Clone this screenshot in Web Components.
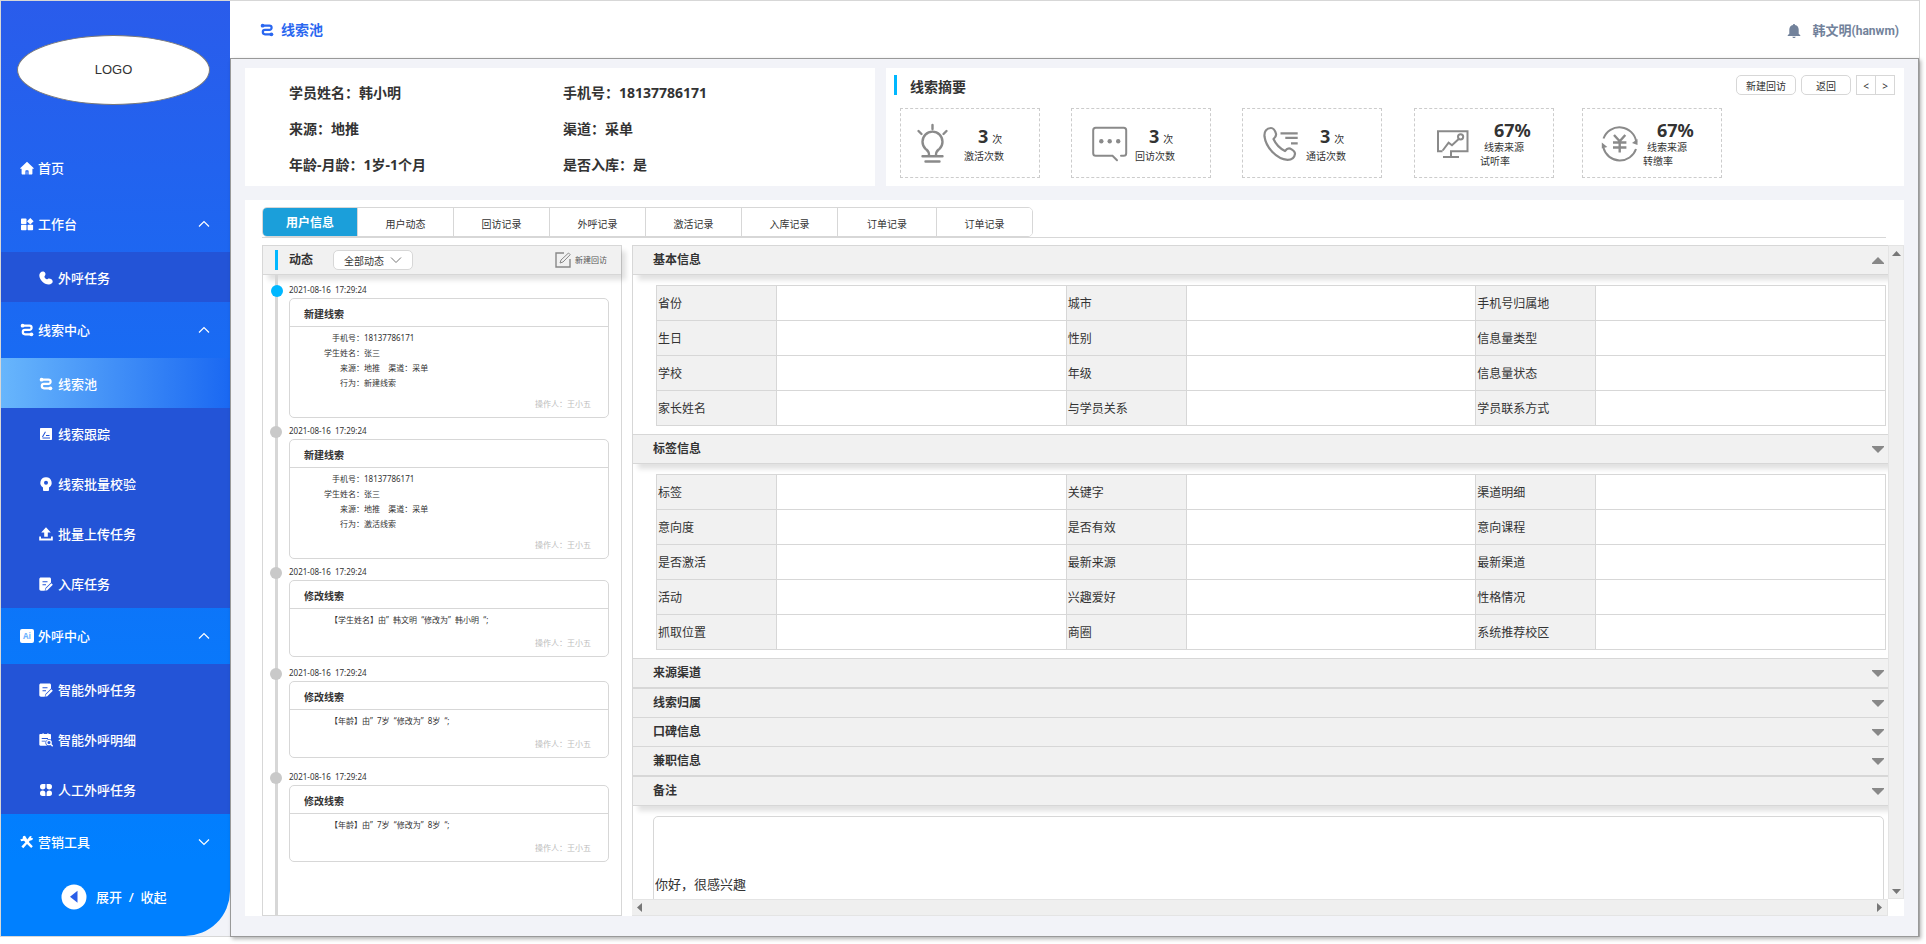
<!DOCTYPE html>
<html lang="zh-CN">
<head>
<meta charset="utf-8">
<title>线索池</title>
<style>
  html, body { margin: 0; height: 100%; background: #fff; }
  body {
    font-family: "Noto Sans", "Noto Sans CJK SC", sans-serif;
    font-size: 12px;
    line-height: 16px;
    color: #333;
    --line: #d7d7d7;
    --accent: #00b7ff;
    --page: #f2f3f8;
    --bar: #f1f1f1;
  }
</style>
</head>
<body>
<lead-app></lead-app>

<script>
const define = (name, html, setup) => {
  const tpl = document.createElement('template');
  tpl.innerHTML = html;
  customElements.define(name, class extends HTMLElement {
    connectedCallback() {
      if (this.shadowRoot) return;
      const root = this.attachShadow({ mode: 'open' });
      root.append(tpl.content.cloneNode(true));
      if (setup) setup(root, this);
    }
  });
};

/* ---------- icons ---------- */
const line = 'fill="none" stroke="currentColor"';
const ICONS = {
  home: ['0 0 14 14', '<path fill="currentColor" d="M7 .8 13.6 7c.4.4.2.8-.3.8h-.9v4.6c0 .6-.4 1-1 1H8.6V10c0-.5-.3-.8-.8-.8H6.200c-.5 0-.8.3-.8.8v3.400H2.600c-.6 0-1-.4-1-1V7.800H.7c-.5 0-.7-.4-.3-.8z"/><rect x="6.400" y="10.500" width="1.200" height="3" fill="currentColor" opacity=".5"/>'],
  blocks: ['0 0 14 14', '<g fill="currentColor"><rect x="1" y="1.500" width="5.500" height="5.500" rx=".8"/><rect x="1" y="7.800" width="5.500" height="5.500" rx=".8"/><rect x="7.600" y="7.800" width="5.500" height="5.500" rx=".8"/><path d="m10.300.9 3.300 3.300-3.300 3.300L7 4.200z"/></g>'],
  route: ['0 0 14 14', `<g ${line} stroke-width="2.200"><path d="M2.500 2.700h7a2 2 0 0 1 0 4.200H5a2.200 2.200 0 0 0 0 4.400h6.500"/></g><circle cx="2.600" cy="2.700" r="1.900" fill="currentColor"/><circle cx="11.400" cy="11.300" r="1.900" fill="currentColor"/>`],
  phone: ['0 0 14 14', '<path fill="currentColor" d="M4.600.5c1.800.4 2.500 3 1.300 4.300-.6.700-.6 1.200-.1 2 .5.900 1.200 1.400 1.900 1.500.8 0 1.300-.8 2.300-.8 1.700 0 3.700 1.300 3.700 3 0 1.600-1.800 3-3.900 3C4.800 13.500.3 8.700.3 4.300.3 2 2.300 0 4.600.5z"/>'],
  track: ['0 0 14 14', '<path fill="currentColor" fill-rule="evenodd" d="M2 1h10c.6 0 1 .4 1 1v10c0 .6-.4 1-1 1H2c-.6 0-1-.4-1-1V2c0-.6.4-1 1-1zm4 3.500L3 9.700l.9.500 3-5.200zM7 8v1h3.500V8zm-3.500 2.600v1h7.500v-1z"/>'],
  bulb: ['0 0 14 14', '<path fill="currentColor" fill-rule="evenodd" d="M7 .3a5.500 5.500 0 0 1 3 10.200V13c0 .6-.3.900-.8.900H4.800c-.5 0-.8-.3-.8-.9v-2.500A5.500 5.500 0 0 1 7 .3zm0 3.500a2 2 0 1 0 0 4 2 2 0 0 0 0-4z"/>'],
  upload: ['0 0 14 14', '<path fill="currentColor" d="m7 .3 4.800 5.200H8.800v4.200H5.200V5.500H2.200zM.2 9.500h1.800v2h10v-2h1.800v4H.2z"/>'],
  note: ['0 0 14 14', '<path fill="currentColor" fill-rule="evenodd" d="M2 .5h8.500c.9 0 1.500.6 1.500 1.500v3.500L6.500 11l-.8 2.700H2c-1 0-1.700-.7-1.700-1.700V2c0-.9.700-1.500 1.700-1.500zm1.500 3.700v1h5v-1zm0 3v1H7v-1z"/><path fill="currentColor" d="m12.300 6.200 1.500 1.500-5.500 5.500-2 .5.500-2z"/>'],
  search: ['0 0 14 14', '<path fill="currentColor" fill-rule="evenodd" d="M2 1h1.500V.300h1.200V1h3.600V.300h1.200V1H11c.5 0 1 .4 1 1v4.500a3.700 3.700 0 0 0-4 6.200H1.500c-.8 0-1.200-.5-1.200-1.200V2C.3 1.400.9 1 1.500 1zm.7 4v.9H9V5zm0 2.700v.900h4v-.9z"/><circle cx="10" cy="9.500" r="2.200" fill="none" stroke="currentColor" stroke-width="1.300"/><path d="m11.500 11 2.200 2.200" stroke="currentColor" stroke-width="1.400"/>'],
  clover: ['0 0 14 14', '<g fill="currentColor"><path d="M3.600 1h2.800v2.700A2.700 2.700 0 1 1 3.600 1zM10.400 1H7.600v2.700A2.700 2.700 0 1 0 10.400 1zM3.600 13h2.800v-2.700A2.700 2.700 0 1 0 3.600 13zM10.400 13H7.600v-2.700a2.700 2.700 0 1 1 2.800 2.700z"/></g>'],
  tools: ['0 0 14 14', '<path fill="currentColor" d="M3 1.200 5 .8l2.300 3.600 2.500-3.100 1.800-.3-.5 2 2 .200-.8 1.800-2.600.8L8.800 7l4 4.300-1.600 1.700L7 9l-3.700 4.200-1.900-1.700L5.400 7.300 4 5.700l-2.800.6-.9-2L2.500 4z"/>'],
  caret: ['0 0 12 12', `<path ${line} stroke-width="1.200" d="m1 8.500 5-5 5 5"/>`],
  back: ['0 0 26 26', '<circle cx="13" cy="13" r="12.500" fill="#fff"/><path fill="#2a5fe8" d="M16.500 6.800v12L9 12.800z"/>'],
  bell: ['0 0 14 16', '<path fill="currentColor" d="M7 1c.7 0 1 .4 1 1 2.300.5 3.700 2.200 3.700 4.600v4.200l1.600 1.400v.8H.7v-.8l1.600-1.400V6.600C2.300 4.200 3.700 2.500 6 2c0-.6.3-1 1-1zM5.300 13.800h3.400c-.2.900-.8 1.300-1.700 1.300s-1.500-.4-1.700-1.300z"/>'],
  chev: ['0 0 12 8', `<path ${line} d="m1 1.500 5 5 5-5"/>`],
  edit: ['0 0 16 16', `<path ${line} stroke-width="1.400" d="M9 1H1v14h14V7"/><path ${line} d="m5 11 1-3 7.500-7 1.700 1.700L8 10z"/>`],
  idea: ['0 0 42 42', `<g ${line} stroke-width="2.400" stroke-linecap="round"><path d="M16.500 3v4M2.500 9l3 3M30.500 9l-3 3M13 33c0-4-1.500-4.500-3.500-6.200a10 10 0 1 1 14 0C21.500 28.500 20 29 20 33M6.500 34.300h20M9.500 39.500h14"/></g>`],
  chat: ['0 0 42 42', `<g ${line} stroke-width="2" stroke-linecap="round"><path d="M30 38.300l-4.500-4.600H8.700a2.500 2.500 0 0 1-2.500-2.500v-23a2.500 2.500 0 0 1 2.500-2.500h28a2.500 2.500 0 0 1 2.500 2.500v23a2.500 2.500 0 0 1-2.500 2.500H34"/></g><g fill="currentColor"><circle cx="14.300" cy="19.300" r="2.200"/><circle cx="22.700" cy="19.300" r="2.200"/><circle cx="31.200" cy="19.300" r="2.200"/></g>`],
  call: ['0 0 42 42', `<g ${line} stroke-width="2.200" stroke-linejoin="round"><path d="M13 6C8.500 6 6 9.500 6.500 14.500 8 25.500 18.500 37 29.500 37.800c4 0 7-2.300 7.500-6 0-2.200-2.500-4-5-5.200-2.200-.6-3.500.5-5 2.400C22 26.500 17.500 21.500 15.500 17c1.500-1.200 3-2.700 2.500-5.200C17 8.200 15.500 6 13 6z"/><path d="M22.500 11.300h17.200M27.300 15.900h12.400M33 21.300h6.700"/></g>`],
  chart: ['0 0 42 42', `<g ${line} stroke-width="2"><path d="M12.500 29.200H8V9.200h29.500v20H21v5.500M13 35h16M12.700 28.500l5.900-7.800 3.400 2.600 6.700-6.300"/><circle cx="30.600" cy="14.800" r="2.600"/></g>`],
  yen: ['0 0 42 42', `<g ${line} stroke-width="2"><path d="M5.500 16.500a17 17 0 0 1 32.800 3.500M38 27A17 17 0 0 1 5.500 26"/><path stroke-width="2.400" d="m16 13 5.700 6.300L27.300 13M21.700 19v11.500M15 20.500h13.400M15 25.500h13.400"/></g><path fill="currentColor" d="m34 21 5.500-4v6zM3.800 20.500v6l5.500-1.500z"/>`],
};
customElements.define('ui-icon', class extends HTMLElement {
  static observedAttributes = ['name'];
  connectedCallback() { this.draw(); }
  attributeChangedCallback() { this.draw(); }
  draw() {
    const icon = ICONS[this.getAttribute('name')];
    if (!icon) return;
    const root = this.shadowRoot || this.attachShadow({ mode: 'open' });
    root.innerHTML = '<style>:host{display:block;flex:none}svg{display:block;width:100%;height:100%}</style>' +
      `<svg viewBox="${icon[0]}" aria-hidden="true">${icon[1]}</svg>`;
  }
});

/* ---------- side navigation ---------- */
define('nav-item', `
<style>
  :host { display: block; }
  a {
    display: flex; align-items: center; gap: 5px; box-sizing: border-box;
    height: 50px; padding: 2px 0 0 38px;
    color: #fff; text-decoration: none; font-size: 13px; font-weight: 500;
  }
  ui-icon { width: 14px; height: 14px; }
  :host([top]) a { height: 56px; padding: 0 0 0 19px; gap: 4px; }
  :host([active]) a { background: linear-gradient(90deg, #68b6fc, #1a68f2); }
</style>
<a href="#"><ui-icon></ui-icon><span><slot></slot></span></a>`,
(root, host) => {
  root.querySelector('ui-icon').setAttribute('name', host.getAttribute('icon'));
  if (host.hasAttribute('active')) root.querySelector('a').setAttribute('aria-current', 'page');
});

define('nav-group', `
<style>
  :host { display: block; }
  button {
    display: flex; align-items: center; gap: 4px; box-sizing: border-box;
    width: 100%; height: 56px; margin: 0; padding: 0 20px 0 19px;
    border: 0; background: none; color: #fff; text-align: left;
    font: inherit; font-size: 13px; font-weight: 500; line-height: 16px;
  }
  .label { flex: 1; }
  .mark { width: 14px; height: 14px; display: grid; }
  .caret { width: 12px; height: 12px; }
  :host([closed]) .caret { transform: rotate(180deg); }
  .sub { background: #2354d7; }
  .ai { background: #fff; border-radius: 2px; color: #6db4ff; font: 700 8px/14px "Open Sans", sans-serif; text-align: center; }
</style>
<button type="button"><span class="mark"></span><span class="label"></span><ui-icon class="caret" name="caret"></ui-icon></button>
<div class="sub"><slot></slot></div>`,
(root, host) => {
  const mark = root.querySelector('.mark'), icon = host.getAttribute('icon');
  if (icon === 'ai') { mark.classList.add('ai'); mark.textContent = 'Ai'; }
  else mark.innerHTML = `<ui-icon name="${icon}"></ui-icon>`;
  root.querySelector('.label').textContent = host.getAttribute('label');
  root.querySelector('button').setAttribute('aria-expanded', String(!host.hasAttribute('closed')));
});

define('side-nav', `
<style>
  :host {
    display: flex; flex-direction: column; flex: none; width: 229px;
    background: linear-gradient(180deg, #2a5ceb, #0080ff 92%);
    border-bottom-right-radius: 45px; color: #fff;
  }
  .logo {
    display: grid; place-items: center; box-sizing: border-box;
    height: 70px; margin: 34px 20px 35px 16px;
    background: #fff; border: 1px solid #797979; border-radius: 50%;
    color: #333; font: 13px/16px "Liberation Sans", sans-serif;
  }
  .fold {
    display: flex; align-items: center; gap: 9px; align-self: flex-start;
    margin: 14px 0 0 60px; padding: 0; border: 0; background: none; color: #fff;
    font: inherit; font-size: 13px; font-weight: 500; line-height: 16px;
  }
  .fold span { white-space: pre; }
  .fold ui-icon { width: 26px; height: 26px; }
</style>
<div class="logo">LOGO</div>
<nav>
  <nav-item top icon="home">首页</nav-item>
  <nav-group icon="blocks" label="工作台">
    <nav-item icon="phone">外呼任务</nav-item>
  </nav-group>
  <nav-group icon="route" label="线索中心">
    <nav-item icon="route" active>线索池</nav-item>
    <nav-item icon="track">线索跟踪</nav-item>
    <nav-item icon="bulb">线索批量校验</nav-item>
    <nav-item icon="upload">批量上传任务</nav-item>
    <nav-item icon="note">入库任务</nav-item>
  </nav-group>
  <nav-group icon="ai" label="外呼中心">
    <nav-item icon="note">智能外呼任务</nav-item>
    <nav-item icon="search">智能外呼明细</nav-item>
    <nav-item icon="clover">人工外呼任务</nav-item>
  </nav-group>
  <nav-group icon="tools" label="营销工具" closed></nav-group>
</nav>
<button class="fold" type="button"><ui-icon name="back"></ui-icon><span>展开  /  收起</span></button>`);

/* ---------- top bar ---------- */
define('top-bar', `
<style>
  :host { display: flex; justify-content: space-between; align-items: center; height: 57px; padding: 0 20px 0 30px; background: #fff; }
  h1 { display: flex; align-items: center; gap: 7px; margin: 0; font-size: 14px; line-height: 16px; color: #2a67f0; }
  h1 ui-icon { width: 14px; height: 14px; }
  .user { display: flex; align-items: center; color: #72829b; font-size: 13px; font-weight: 700; padding-top: 2px; }
  .user ui-icon { width: 14px; height: 16px; margin-right: 12px; }
  .login { font-family: Roboto, sans-serif; font-size: 12px; }
</style>
<h1><ui-icon name="route"></ui-icon>线索池</h1>
<div class="user"><ui-icon name="bell"></ui-icon><span>韩文明<span class="login">(hanwm)</span></span></div>`);

/* ---------- student card ---------- */
define('student-card', `
<style>
  :host { display: block; background: #fff; box-sizing: border-box; padding: 7px 0 0 44px; }
  dl { display: grid; grid-template-columns: 274px 1fr; grid-auto-rows: 36px; margin: 0; font-size: 14px; line-height: 20px; font-weight: 700; }
  dl div { display: flex; align-items: center; }
  dd { margin: 0; }
</style>
<dl>
  <div><dt>学员姓名：</dt><dd>韩小明</dd></div>
  <div><dt>手机号：</dt><dd>18137786171</dd></div>
  <div><dt>来源：</dt><dd>地推</dd></div>
  <div><dt>渠道：</dt><dd>采单</dd></div>
  <div><dt>年龄-月龄：</dt><dd>1岁-1个月</dd></div>
  <div><dt>是否入库：</dt><dd>是</dd></div>
</dl>`);

/* ---------- summary card ---------- */
define('stat-card', `
<style>
  :host { display: flex; align-items: center; box-sizing: border-box; flex: none; width: 140px; height: 70px; padding-left: 15px; border: 1px dashed #ccc; --gap: 6px; }
  .pic { display: block; width: 42px; height: 42px; color: #8a8a8a; }
  .text { margin-left: var(--gap); padding-top: 2px; font-size: 10px; line-height: 14px; color: #333; }
  .num { display: flex; align-items: baseline; gap: 4px; padding-left: 14px; line-height: 20px; }
  b { font-size: 18px; }
  :host([rate]) .label { text-indent: 4px; }
</style>
<span class="pic"></span>
<div class="text"><div class="num"><b></b><span class="unit"></span></div><div class="label"><slot></slot></div></div>`,
(root, host) => {
  root.querySelector('.pic').innerHTML = `<ui-icon name="${host.getAttribute('icon')}"></ui-icon>`;
  root.querySelector('b').textContent = host.getAttribute('value');
  root.querySelector('.unit').textContent = host.getAttribute('unit') || '';
});

define('summary-card', `
<style>
  :host { display: block; box-sizing: border-box; padding: 7px 9px 8px 8px; background: #fff; }
  header { display: flex; align-items: center; height: 20px; margin-bottom: 13px; }
  h2 { flex: 1; margin: 0; padding: 2px 0 0 13px; height: 18px; border-left: 3px solid var(--accent); font-size: 14px; line-height: 20px; }
  button { box-sizing: border-box; height: 20px; margin: 0 0 0 5px; padding: 2px 0 0; border: 1px solid var(--line); border-radius: 5px; background: #fff; color: #333; font: inherit; font-size: 10px; line-height: 14px; }
  .wide { width: 60px; }
  .mid { width: 50px; }
  .step { width: 20px; border-radius: 0; }
  .step + .step { margin-left: -1px; }
  .stats { display: flex; gap: 31px; padding-left: 6px; }
  .sooner { margin: 0 -3px 0 1px; --gap: 8px; }
  .late { --gap: 3px; }
</style>
<header>
  <h2>线索摘要</h2>
  <button class="wide" type="button">新建回访</button>
  <button class="mid" type="button">返回</button>
  <button class="step" type="button">&lt;</button><button class="step" type="button">&gt;</button>
</header>
<div class="stats">
  <stat-card icon="idea" value="3" unit="次">激活次数</stat-card>
  <stat-card icon="chat" value="3" unit="次">回访次数</stat-card>
  <stat-card icon="call" value="3" unit="次">通话次数</stat-card>
  <stat-card class="sooner" icon="chart" value="67%" rate>线索来源<br>试听率</stat-card>
  <stat-card class="late" icon="yen" value="67%" rate>线索来源<br>转缴率</stat-card>
</div>`);

/* ---------- tabs ---------- */
define('tab-strip', `
<style>
  :host { display: block; border-bottom: 1px solid var(--line); }
  .tabs { display: inline-flex; vertical-align: top; border: 1px solid var(--line); border-radius: 5px; overflow: hidden; }
  button { box-sizing: border-box; width: 96px; height: 28px; margin: 0; padding: 3px 0 0; border: 0; border-left: 1px solid var(--line); background: #fff; color: #333; font: inherit; font-size: 10px; line-height: 16px; }
  button:first-child { border-left: 0; padding-top: 2px; width: 94px; background: #1b9fda; color: #fff; font-size: 12px; font-weight: 700; }
  button:nth-child(7) { width: 99px; }
</style>
<div class="tabs" role="tablist"></div>`,
root => {
  root.querySelector('.tabs').innerHTML = ['用户信息', '用户动态', '回访记录', '外呼记录', '激活记录', '入库记录', '订单记录', '订单记录']
    .map((t, i) => `<button type="button" role="tab" aria-selected="${i === 0}">${t}</button>`).join('');
});

/* ---------- activity timeline ---------- */
define('timeline-entry', `
<style>
  :host { display: grid; grid-template-columns: 26px 320px; margin-bottom: 7px; font-size: 8px; line-height: 15px; }
  :host([change]) { margin-bottom: 10px; }
  .dot { width: 12px; height: 12px; margin: 1px 0 0 7px; border-radius: 50%; background: #c9c9c9; }
  :host([current]) .dot { background: var(--accent); margin-left: 8px; }
  time { height: 14px; line-height: 12px; white-space: pre; }
  article { grid-column: 2; display: flex; flex-direction: column; box-sizing: border-box; min-height: 77px; border: 1px solid var(--line); border-radius: 5px; background: #fff; }
  h3 { margin: 0; padding: 3px 14px 0; height: 24px; border-bottom: 1px solid var(--line); font-size: 10px; line-height: 24px; }
  .body { padding-top: 3px; }
  .by { margin: auto 17px 0 0; padding: 6px 0; text-align: right; color: #bdbdbd; }
</style>
<span class="dot"></span><time>2021-08-16  17:29:24</time>
<article><h3></h3><div class="body"><slot></slot></div><div class="by">操作人：王小五</div></article>`,
(root, host) => { root.querySelector('h3').textContent = host.getAttribute('heading'); });

define('lead-facts', `
<style>
  :host { display: block; }
  dl { display: grid; grid-template-columns: 74px 1fr; margin: 0; }
  dt { text-align: right; }
  dd { margin: 0; white-space: pre; }
</style>
<dl>
  <dt>手机号：</dt><dd>18137786171</dd>
  <dt>学生姓名：</dt><dd>张三</dd>
  <dt>来源：</dt><dd>地推    渠道：采单</dd>
  <dt>行为：</dt><dd><slot></slot></dd>
</dl>`);

define('activity-panel', `
<style>
  :host { display: flex; flex-direction: column; min-height: 0; border: 1px solid var(--line); }
  header { display: flex; align-items: center; box-sizing: border-box; height: 29px; padding: 0 14px 0 12px; background: var(--bar); border-bottom: 1px solid var(--line); box-shadow: 5px 5px 5px rgba(0,0,0,.12); }
  h2 { margin: 0 20px 0 0; padding-left: 11px; border-left: 3px solid var(--accent); font-size: 12px; line-height: 20px; }
  .pick { display: grid; align-items: center; }
  .pick > * { grid-area: 1 / 1; }
  select { appearance: none; box-sizing: border-box; width: 80px; height: 20px; margin: 0; padding: 2px 0 0 10px; border: 1px solid var(--line); border-radius: 5px; background: #fff; color: #333; font: inherit; font-size: 10px; line-height: 14px; }
  .pick ui-icon { justify-self: end; width: 12px; height: 8px; margin-right: 11px; pointer-events: none; color: #777; }
  .new { display: flex; align-items: center; gap: 4px; margin: 0 0 0 auto; padding: 0; border: 0; background: none; color: #555; font: inherit; font-size: 8px; line-height: 12px; }
  .new ui-icon { width: 16px; height: 16px; color: #888; }
  .list { flex: 1; min-height: 0; padding-top: 9px; overflow: hidden; background: linear-gradient(var(--line), var(--line)) 12px 0 / 3px 100% no-repeat; }
  .change { padding-left: 40px; white-space: pre; }
  timeline-entry:nth-last-child(2) { margin-bottom: 13px; }
</style>
<header>
  <h2>动态</h2>
  <label class="pick"><select aria-label="动态类型"><option>全部动态</option></select><ui-icon name="chev"></ui-icon></label>
  <button class="new" type="button"><ui-icon name="edit"></ui-icon>新建回访</button>
</header>
<div class="list">
  <timeline-entry current heading="新建线索"><lead-facts>新建线索</lead-facts></timeline-entry>
  <timeline-entry heading="新建线索"><lead-facts>激活线索</lead-facts></timeline-entry>
  <timeline-entry change heading="修改线索"><div class="change">【学生姓名】由”  韩文明  “修改为”  韩小明  “;</div></timeline-entry>
  <timeline-entry change heading="修改线索"><div class="change">【年龄】由”  7岁  “修改为”  8岁  “;</div></timeline-entry>
  <timeline-entry change heading="修改线索"><div class="change">【年龄】由”  7岁  “修改为”  8岁  “;</div></timeline-entry>
</div>`);

/* ---------- detail sections ---------- */
define('info-section', `
<style>
  :host { display: block; }
  :host([joined]) { margin-top: -1px; }
  h2 { margin: 0; }
  button { display: flex; justify-content: space-between; align-items: center; box-sizing: border-box; width: 100%; height: 30px; margin: 0; padding: 0 4px 0 20px; border: 1px solid var(--line); border-width: 1px 0; background: var(--bar); box-shadow: 5px 5px 5px rgba(0,0,0,.12); color: #333; font: inherit; font-size: 12px; font-weight: 700; line-height: 16px; }
  svg { width: 12px; height: 7px; fill: #888; }
  :host([up]) svg { transform: rotate(180deg); }
</style>
<h2><button type="button"><span></span><svg viewBox="0 0 12 7" aria-hidden="true"><path d="M0 0h12v1L6 7 0 1z"/></svg></button></h2>
<slot></slot>`,
(root, host) => { root.querySelector('span').textContent = host.getAttribute('heading'); });

define('info-table', `
<style>
  :host { display: block; padding: 10px 2px 8px 23px; }
  table { width: 100%; table-layout: fixed; border-collapse: collapse; }
  th, td { box-sizing: border-box; height: 35px; padding: 2px 0 0 1px; border: 1px solid var(--line); }
  th { width: 120px; background: var(--bar); font-weight: 400; font-size: 12px; line-height: 16px; text-align: left; }
</style>
<table><tbody></tbody></table>`,
(root, host) => {
  root.querySelector('tbody').innerHTML = host.getAttribute('rows').split(';')
    .map(r => '<tr>' + r.split(',').map(c => `<th scope="row">${c}</th><td></td>`).join('') + '</tr>').join('');
});

define('scroll-rail', `
<style>
  :host { display: flex; justify-content: space-between; align-items: center; box-sizing: border-box; background: #efefef; border: 1px solid #e4e4e4; }
  :host([vertical]) { flex-direction: column; padding: 5px 0 4px; }
  :host(:not([vertical])) { padding: 0 5px; border-left: 0; }
  svg { width: 9px; height: 9px; fill: #777; }
  :host([vertical]) svg { height: 5px; width: 9px; }
  :host(:not([vertical])) svg { width: 5px; }
</style>`,
(root, host) => {
  const v = host.hasAttribute('vertical');
  const tri = (box, d) => `<svg viewBox="${box}" aria-hidden="true"><path d="${d}"/></svg>`;
  root.innerHTML += v ? tri('0 0 9 5', 'M4.500 0 9 5H0z') + tri('0 0 9 5', 'M0 0h9L4.500 5z')
                      : tri('0 0 5 9', 'M5 0v9L0 4.500z') + tri('0 0 5 9', 'M0 0l5 4.500L0 9z');
});

define('detail-panel', `
<style>
  :host { display: grid; grid-template: minmax(0, 1fr) 17px / minmax(0, 1fr) 16px; min-height: 0; }
  .view { overflow: auto; scrollbar-width: none; border-left: 1px solid var(--line); }
  input { display: block; box-sizing: border-box; width: calc(100% - 24px); height: 134px; margin: 10px 4px 20px 20px; padding: 0 2px 0 1px; border: 1px solid var(--line); border-radius: 5px; background: #fff; color: #333; font: inherit; font-size: 13px; }
</style>
<div class="view">
  <info-section up heading="基本信息"><info-table rows="省份,城市,手机号归属地;生日,性别,信息量类型;学校,年级,信息量状态;家长姓名,与学员关系,学员联系方式"></info-table></info-section>
  <info-section heading="标签信息"><info-table rows="标签,关键字,渠道明细;意向度,是否有效,意向课程;是否激活,最新来源,最新渠道;活动,兴趣爱好,性格情况;抓取位置,商圈,系统推荐校区"></info-table></info-section>
  <info-section heading="来源渠道"></info-section>
  <info-section heading="线索归属"></info-section>
  <info-section joined heading="口碑信息"></info-section>
  <info-section joined heading="兼职信息"></info-section>
  <info-section heading="备注"><input type="text" aria-label="备注" value="你好，很感兴趣"></info-section>
</div>
<scroll-rail vertical></scroll-rail>
<scroll-rail></scroll-rail>`);

/* ---------- page ---------- */
define('lead-app', `
<style>
  :host { display: flex; box-sizing: border-box; height: calc(100vh - 7px); min-height: 937px; margin-right: 6px; border: 1px solid var(--line); background: var(--page); }
  .right { display: flex; flex-direction: column; flex: 1; min-width: 0; }
  main { display: flex; flex-direction: column; gap: 14px; flex: 1; min-height: 0; box-sizing: border-box; padding: 9px 14px 20px; margin: 0 0 -1px; border: 1px solid #999; background: var(--page); box-shadow: 2px 2px 4px rgba(0,0,0,.3); }
  .cards { display: grid; grid-template-columns: minmax(0, 630fr) minmax(0, 1018fr); gap: 11px; flex: none; }
  .work { display: flex; flex-direction: column; flex: 1; min-height: 0; padding: 7px 0 0 17px; background: #fff; }
  tab-strip { margin: 0 18px 7px 0; }
  .panels { display: grid; grid-template: minmax(0, 1fr) / 360px minmax(0, 1fr); gap: 10px; flex: 1; min-height: 0; }
</style>
<side-nav></side-nav>
<div class="right">
  <top-bar></top-bar>
  <main>
    <div class="cards"><student-card></student-card><summary-card></summary-card></div>
    <section class="work">
      <tab-strip></tab-strip>
      <div class="panels"><activity-panel></activity-panel><detail-panel></detail-panel></div>
    </section>
  </main>
</div>`);
</script>
</body>
</html>
